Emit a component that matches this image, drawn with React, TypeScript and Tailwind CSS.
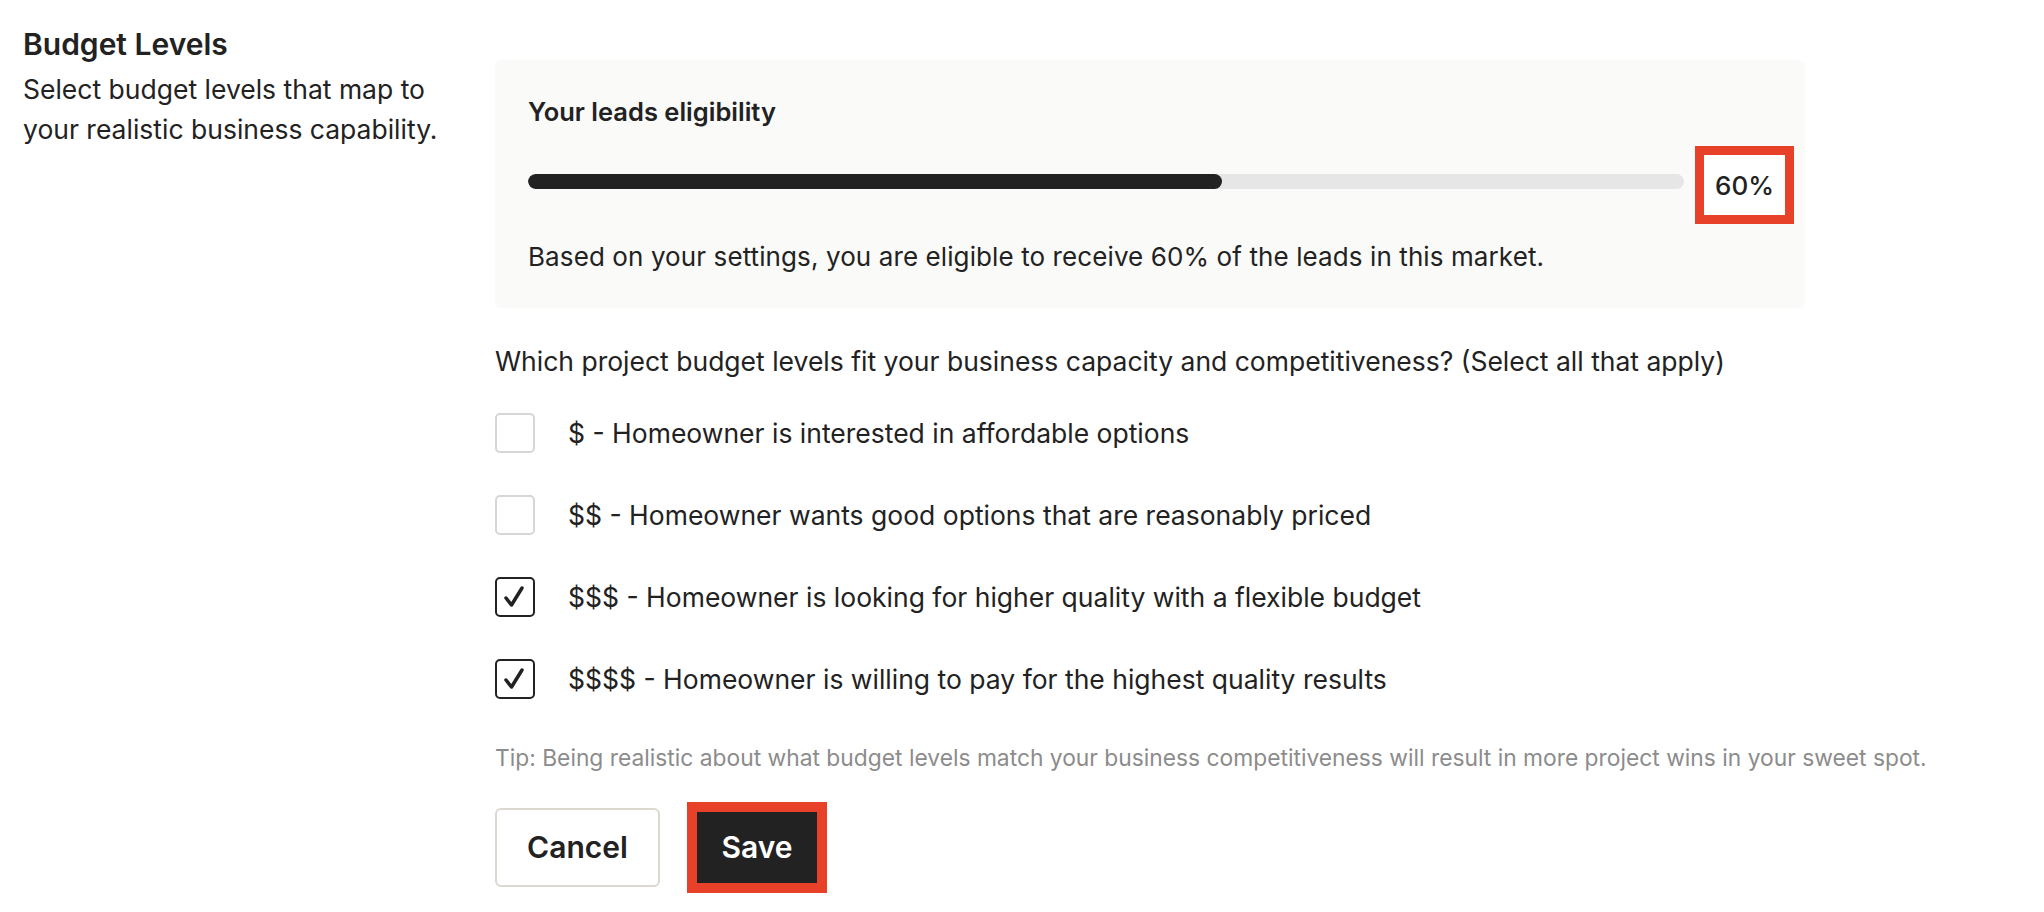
import React from 'react';

const options = [
  { label: '$ - Homeowner is interested in affordable options', checked: false },
  { label: '$$ - Homeowner wants good options that are reasonably priced', checked: false },
  { label: '$$$ - Homeowner is looking for higher quality with a flexible budget', checked: true },
  { label: '$$$$ - Homeowner is willing to pay for the highest quality results', checked: true },
];

function Checkbox({ checked }: { checked: boolean }) {
  if (!checked) {
    return <div className="w-[40px] h-[40px] shrink-0 rounded-[5px] border-2 border-[#d6d6d6] bg-white" />;
  }
  return (
    <div className="w-[40px] h-[40px] shrink-0 rounded-[5px] border-2 border-[#222] bg-white flex items-center justify-center">
      <svg width="40" height="40" viewBox="0 0 40 40" className="-m-[2px]">
        <path d="M11 21 L16.5 28 L27 11" fill="none" stroke="#222" strokeWidth="3.5" strokeLinecap="round" strokeLinejoin="round" />
      </svg>
    </div>
  );
}

export default function App() {
  const eligibility = 60;

  return (
    <div className="min-h-screen bg-white text-[#222] font-['Inter',sans-serif] px-[23px] pt-[24px] flex">
      {/* Left: section heading */}
      <div className="w-[472px] shrink-0">
        <h2 className="text-[30px] leading-[40px] font-semibold">Budget Levels</h2>
        <p className="text-[26.5px] leading-[40px] mt-[5px]">
          Select budget levels that map to
          <br />
          your realistic business capability.
        </p>
      </div>

      {/* Right: form */}
      <div className="flex-1 pt-[36px]">
        <div className="w-[1310px] bg-[#fafaf9] rounded-md pl-[33px] pr-[11px] pt-[34px] pb-[31px]">
          <h3 className="text-[25.5px] leading-[36px] font-semibold">Your leads eligibility</h3>
          <div className="mt-[16px] flex items-center gap-[11px]">
            <div className="flex-1 h-[15px] mb-[8px] rounded-full bg-[#e6e6e6] overflow-hidden">
              <div className="h-full rounded-full bg-[#222]" style={{ width: `${eligibility}%` }} />
            </div>
            <div className="w-[99px] h-[78px] border-[9px] border-[#e8412a] bg-white flex items-center justify-center text-[26px] font-medium">
              {eligibility}%
            </div>
          </div>
          <p className="mt-[13px] text-[26px] leading-[40px] tracking-[0.1px]">
            Based on your settings, you are eligible to receive {eligibility}% of the leads in this market.
          </p>
        </div>

        <p className="mt-[33px] text-[26.5px] leading-[40px]">
          Which project budget levels fit your business capacity and competitiveness? (Select all that apply)
        </p>

        <div className="mt-[32px] flex flex-col gap-[42px]">
          {options.map((o) => (
            <label key={o.label} className="flex items-center gap-[33px] text-[26.5px] leading-[40px]">
              <Checkbox checked={o.checked} />
              <span>{o.label}</span>
            </label>
          ))}
        </div>

        <p className="mt-[43px] text-[22.8px] leading-[32px] text-[#8c8c8c] whitespace-nowrap">
          Tip: Being realistic about what budget levels match your business competitiveness will result in more project wins in your sweet spot.
        </p>

        <div className="mt-[28px] flex items-center gap-[27px]">
          <button className="w-[165px] h-[79px] rounded-[6px] border-2 border-[#dbd8d0] bg-white text-[30px] font-semibold text-[#222]">
            Cancel
          </button>
          <button className="w-[140px] h-[91px] border-[10px] border-[#e8412a] bg-[#222] text-[30px] font-semibold text-white">
            Save
          </button>
        </div>
      </div>
    </div>
  );
}
